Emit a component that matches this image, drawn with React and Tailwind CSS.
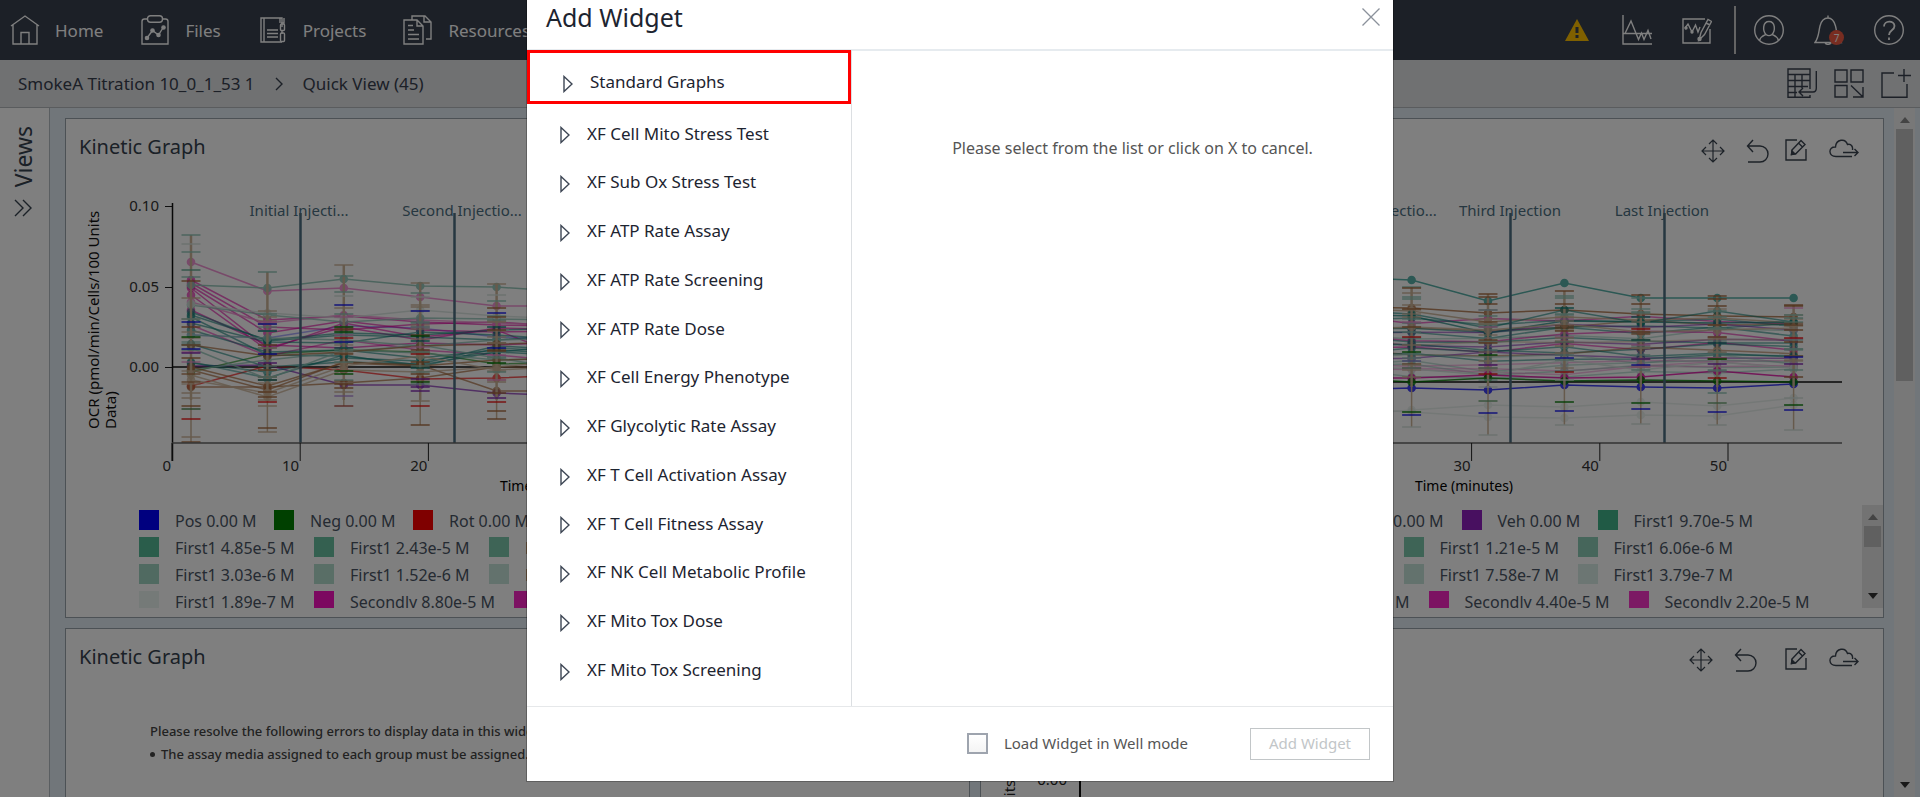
import React from "react";

const MAGENTA = "#e000a0";
const PINK = "#f08ad0";
const TEAL = "#0f8078";
const MINT = "#8fc4b6";
const PALE = "#d5e2dd";
const BROWN = "#a86a3c";
const TAN = "#cdb498";
const VIOLET = "#7d1fb0";
const GREEN = "#007a00";
const BLUE = "#1010f0";
const RED = "#f01010";

const STEP = 76.4;
const pointX = (k) => 19 + STEP * k;

const scatter = (i, k) => {
  const v = Math.sin(i * 127.1 + k * 311.7) * 43758.5453;
  return v - Math.floor(v);
};

const leftChart = {
  zero: 187,
  first: 0,
  yTicks: [
    ["0.10", 26],
    ["0.05", 107],
    ["0.00", 187],
  ],
  series: [
    [VIOLET, 0.7, [186, 185, 205, 205, 213, 216]],
    [BLUE, 0.35, [155, 158, 146, 148, 157, 160]],
    [RED, 0.7, [206, 186, 190, 199, 198, 195]],
    [GREEN, 0.6, [192, 174, 170, 172, 184, 182]],
    [MAGENTA, 0.6, [100, 140, 136, 142, 145, 146]],
    [MAGENTA, 0.6, [103, 147, 150, 144, 142, 147]],
    [MAGENTA, 0.6, [106, 153, 141, 150, 152, 151]],
    [MAGENTA, 0.6, [108, 168, 147, 160, 148, 150]],
    [MAGENTA, 0.6, [115, 170, 143, 157, 150, 180]],
    [MAGENTA, 0.6, [130, 165, 168, 163, 165, 162]],
    [MAGENTA, 0.5, [145, 176, 160, 170, 175, 182]],
    [PINK, 0.8, [122, 143, 135, 140, 143, 146]],
    [TEAL, 0.6, [135, 160, 153, 155, 150, 148]],
    [TEAL, 0.6, [132, 161, 155, 157, 160, 155]],
    [TEAL, 0.6, [143, 162, 163, 152, 155, 160]],
    [TEAL, 0.6, [150, 172, 170, 178, 170, 174]],
    [TEAL, 0.6, [137, 175, 176, 185, 172, 165]],
    [TEAL, 0.6, [164, 187, 182, 184, 166, 170]],
    [TEAL, 0.6, [183, 192, 178, 181, 172, 176]],
    [TEAL, 0.5, [182, 198, 175, 187, 168, 172]],
    [MINT, 0.8, [125, 135, 142, 138, 139, 140]],
    [MINT, 0.8, [155, 158, 160, 166, 160, 158]],
    [MINT, 0.8, [168, 199, 170, 173, 180, 178]],
    [MINT, 0.8, [190, 180, 172, 165, 178, 190]],
    [PINK, 0.9, [82, 111, 108, 117, 126, 126]],
    [MINT, 0.9, [105, 108, 99, 106, 107, 112]],
    [BROWN, 0.7, [165, 176, 172, 166, 164, 162]],
    [BROWN, 0.7, [187, 206, 183, 186, 180, 178]],
    [BROWN, 0.7, [207, 207, 203, 198, 187, 187]],
    [BROWN, 0.7, [190, 210, 182, 185, 211, 211]],
    [TAN, 0.8, [195, 217, 190, 192, 187, 180]],
    [TAN, 0.8, [200, 213, 186, 176, 190, 186]],
    [PALE, 0.8, [124, 133, 138, 130, 136, 139]],
  ],
  whiskers: [
    [[55, MINT], [64, PALE], [72, MINT], [90, "#5aa88c"], [97, MINT], [101, BROWN], [118, TAN], [142, BLUE], [147, BROWN], [157, GREEN], [165, BROWN], [169, BLUE], [173, VIOLET], [178, BROWN], [213, TAN], [218, TAN], [226, BROWN], [229, "#4a8050"], [239, RED], [257, TAN], [262, BROWN]],
    [[92, MINT], [131, TAN], [134, MINT], [142, PINK], [144, BLUE], [151, TEAL], [165, BROWN], [168, TAN], [174, BLUE], [183, VIOLET], [190, BROWN], [197, MINT], [200, TEAL], [212, BROWN], [217, BROWN], [220, TAN], [222, RED], [226, TAN], [248, BROWN], [252, TAN]],
    [[85, TAN], [96, MINT], [112, MINT], [116, PALE], [125, BLUE], [128, TAN], [134, MINT], [147, GREEN], [149, BROWN], [152, GREEN], [158, RED], [162, BLUE], [168, TEAL], [174, BROWN], [182, MINT], [191, GREEN], [194, GREEN], [204, BROWN], [208, BROWN], [212, TAN], [216, "#b08ad8"], [226, "#b05048"]],
    [[103, TAN], [113, MINT], [117, PALE], [125, TAN], [127, TAN], [131, BLUE], [143, MINT], [147, MINT], [156, GREEN], [161, TEAL], [170, BROWN], [174, RED], [182, BROWN], [188, TEAL], [194, BROWN], [199, VIOLET], [202, GREEN], [207, VIOLET], [211, VIOLET], [221, TAN], [226, RED], [245, BROWN]],
    [[104, TAN], [115, PALE], [121, MINT], [128, BROWN], [133, BLUE], [137, BROWN], [142, TAN], [147, TEAL], [150, BROWN], [163, TAN], [168, BLUE], [171, BROWN], [183, GREEN], [192, MINT], [202, TAN], [213, BROWN], [218, VIOLET], [222, RED], [231, BROWN], [239, BROWN]],
  ],
  band: [135, 205],
};

const bandColors = [MAGENTA, TEAL, BROWN, TEAL, VIOLET, TEAL, MINT, MAGENTA, TEAL, VIOLET, TAN];
const middleBand = Array.from({ length: 24 }, (_, i) => {
  const base = 140 + i * 2.3;
  const values = Array.from({ length: 7 }, (_, k) => base + (k === 2 ? 3 : 0) + (scatter(i, k) - 0.5) * 11);
  return [i > 17 ? (i % 2 ? MINT : PINK) : bandColors[i % 11], 0.55, values];
});

const rightChart = {
  zero: 202,
  first: 3,
  yTicks: [],
  series: [
    [PALE, 0.5, [228, 232, 237, 238, 235, 236, 225]],
    [PALE, 0.5, [236, 230, 225, 227, 222, 226, 218]],
    ...middleBand,
    [BROWN, 0.8, [127, 128, 133, 130, 134, 136, 137]],
    [TAN, 0.9, [128, 131, 142, 137, 140, 138, 143]],
    [TEAL, 0.6, [130, 134, 148, 130, 143, 131, 142]],
    [TEAL, 0.7, [134, 136, 153, 141, 142, 143, 142]],
    [TAN, 0.8, [150, 147, 150, 144, 152, 150, 148]],
    [PALE, 0.9, [185, 189, 195, 180, 190, 182, 188]],
    [MAGENTA, 0.8, [198, 198, 195, 198, 197, 191, 197]],
    [BLUE, 0.8, [210, 208, 210, 205, 207, 208, 204]],
    [GREEN, 0.8, [198, 202, 198, 201, 200, 201, 202]],
    ["#58b0a8", 1, [97, 100, 121, 103, 118, 118, 118]],
  ],
  whiskers: [
    [],
    [[107, MINT], [108, BROWN], [113, TAN], [117, MINT], [119, MINT], [125, TAN], [129, BROWN], [147, BROWN], [152, MINT], [157, RED], [165, TAN], [172, GREEN], [181, "#8080d0"], [188, MINT], [197, TAN], [232, GREEN], [235, BLUE], [247, PALE]],
    [[114, BROWN], [117, BROWN], [124, BROWN], [130, MINT], [136, MINT], [144, TAN], [160, BROWN], [163, BROWN], [170, MINT], [175, GREEN], [181, TAN], [185, VIOLET], [194, RED], [200, MINT], [207, PALE], [221, "#6aa070"], [233, BLUE], [255, PALE]],
    [[111, BROWN], [116, MINT], [118, MINT], [124, BROWN], [128, TEAL], [134, MINT], [148, BROWN], [151, BROWN], [158, TAN], [166, TAN], [173, TAN], [178, BLUE], [192, RED], [200, PALE], [222, GREEN], [231, BLUE], [245, PALE]],
    [[115, BROWN], [118, MINT], [124, BROWN], [132, MINT], [137, TEAL], [149, RED], [152, BROWN], [160, TEAL], [168, TAN], [175, MINT], [179, VIOLET], [185, BLUE], [190, MINT], [223, GREEN], [229, BLUE], [244, PALE]],
    [[116, BROWN], [119, BROWN], [126, BROWN], [131, MINT], [137, MINT], [145, BROWN], [157, BROWN], [163, TEAL], [172, TAN], [179, GREEN], [184, VIOLET], [190, MINT], [198, RED], [213, MINT], [223, "#6aa070"], [232, BLUE], [245, PALE]],
    [[125, BROWN], [126, BROWN], [135, MINT], [138, MINT], [145, BROWN], [150, BROWN], [158, RED], [162, BROWN], [169, MINT], [177, BLUE], [184, VIOLET], [190, MINT], [197, BROWN], [218, PALE], [225, GREEN], [230, BLUE], [250, PALE]],
  ],
  band: [128, 192],
};

const AXIS = 106;
const INJECTIONS = [
  ["Initial Injecti...", 128, 127],
  ["Second Injectio...", 282, 290],
  ["Third Injection", 423, 423],
  ["Last Injection", 577, 575],
];

function Whisker({ x, caps, band, seed }) {
  const [top, bottom] = band;
  const fill = [TAN, MINT, BROWN, TAN, MINT, PINK];
  return (
    <g>
      <path d={`M${x} ${caps[0][0]}V${bottom + 15}`} stroke={TAN} strokeWidth="2.5" />
      <path d={`M${x} ${bottom + 15}V${caps[caps.length - 1][0]}`} stroke={TAN} strokeWidth="1.5" />
      {Array.from({ length: 14 }, (_, i) => {
        const y = Math.round(top + scatter(i, seed + 20) * (bottom - top));
        return <path key={i} d={`M${x - 9.5} ${y}H${x + 9.5}`} stroke={fill[i % 6]} strokeWidth="2" opacity="0.6" />;
      })}
      {caps.map(([y, color], i) => (
        <path key={i} d={`M${x - 9.5} ${y}H${x + 9.5}`} stroke={color} strokeWidth="1.7" opacity="0.8" />
      ))}
    </g>
  );
}

function KineticChart({ chart }) {
  return (
    <svg width="880" height="315" className="block max-w-full shrink-0 overflow-hidden" fontSize="15" fill="#333" role="img" aria-label="Kinetic graph">
      <g transform="rotate(-90)" fill="#111">
        <text x="-249" y="33">OCR (pmol/min/Cells/100 Units</text>
        <text x="-249" y="50">Data)</text>
      </g>
      <g transform={`translate(${AXIS} 0)`}>
        <g fill="#4c6f82">
          {INJECTIONS.map(([label, , x]) => (
            <text key={label} x={x} y="36" textAnchor="middle">{label}</text>
          ))}
        </g>
        {chart.yTicks.map(([label, y]) => (
          <g key={label}>
            <text x="-13" y={y + 5} textAnchor="end">{label}</text>
            <path d={`M-7 ${y}.5H0`} stroke="#222" />
          </g>
        ))}
        <path d="M0.500 23V281" stroke="#111" strokeWidth="1.500" />
        <path d={`M0 ${chart.zero}H755`} stroke="#111" strokeWidth="1.500" />
        {chart.series.map(([color, opacity, values], i) => (
          <g key={i} opacity={opacity} stroke={color} fill={color}>
            <polyline fill="none" strokeWidth="1.500" points={values.map((y, k) => `${pointX(k + chart.first)},${y}`).join(" ")} />
            {values.map((y, k) => (
              <circle key={k} cx={pointX(k + chart.first)} cy={y} r="4.300" stroke="none" />
            ))}
          </g>
        ))}
        {chart.whiskers.map((caps, k) =>
          caps.length ? <Whisker key={k} x={pointX(k + chart.first)} caps={caps} band={chart.band} seed={k} /> : null
        )}
        {INJECTIONS.map(([label, x]) => (
          <path key={label} d={`M${x}.5 33V263`} stroke="#4c6f82" strokeWidth="2.500" />
        ))}
        <path d="M0 263H755" stroke="#666" strokeWidth="1.500" />
        {[0, 1, 2, 3, 4, 5].map((n) => (
          <g key={n}>
            <path d={`M${n * 128.2} 263V281`} stroke="#222" />
            <text x={n * 128.2 - 1} y="291" textAnchor="end">{n * 10}</text>
          </g>
        ))}
        <text x="377" y="311" fontSize="14" fill="#000" textAnchor="middle">Time (minutes)</text>
      </g>
    </svg>
  );
}

const LEGEND = [
  [
    ["Pos 0.00 M", "bg-[#0000ff]", "w-[135px]"],
    ["Neg 0.00 M", "bg-[#008000]", "w-[139px]"],
    ["Rot 0.00 M", "bg-[#ff0000]", "w-[134px]"],
    ["Veh 0.00 M", "bg-[#9020c0]", "w-[136px]"],
    ["First1 9.70e-5 M", "bg-[#40b48a]", "w-[175px]"],
  ],
  [
    ["First1 4.85e-5 M", "bg-[#54ba96]", "w-[175px]"],
    ["First1 2.43e-5 M", "bg-[#68c0a0]", "w-[175px]"],
    ["First1 1.21e-5 M", "bg-[#7cc8ac]", "w-[174px]"],
    ["First1 6.06e-6 M", "bg-[#8cccb6]", "w-[175px]"],
  ],
  [
    ["First1 3.03e-6 M", "bg-[#a0d4c2]", "w-[175px]"],
    ["First1 1.52e-6 M", "bg-[#b2dccd]", "w-[175px]"],
    ["First1 7.58e-7 M", "bg-[#c6e4da]", "w-[174px]"],
    ["First1 3.79e-7 M", "bg-[#d8ece6]", "w-[175px]"],
  ],
  [
    ["First1 1.89e-7 M", "bg-[#ebf5f1]", "w-[175px]"],
    ["Secondly 8.80e-5 M", "bg-[#f810c0]", "w-[200px]"],
    ["Secondly 4.40e-5 M", "bg-[#f824c4]", "w-[200px]"],
    ["Secondly 2.20e-5 M", "bg-[#f834c8]", "w-[200px]"],
  ],
];

function Arrow({ up, className }) {
  return (
    <svg viewBox="0 0 10 6" width="10" height="6" fill="currentColor" className={className}>
      <path d={up ? "M5 0L10 6H0Z" : "M0 0H10L5 6Z"} />
    </svg>
  );
}

function Legend() {
  return (
    <div className="mt-2.5 flex h-[103px] overflow-hidden text-base text-[#4a5564]">
      <div className="min-w-0 flex-1 overflow-hidden pt-[5px] pl-[73px]">
        {LEGEND.map((row, i) => (
          <ul key={i} className="flex h-[27px] items-start whitespace-nowrap">
            {row.map(([label, color, width]) => (
              <li key={label} className={`flex shrink-0 gap-4 ${width}`}>
                <span className={`size-5 shrink-0 ${color}`} />
                <span className="leading-[23px]">{label}</span>
              </li>
            ))}
          </ul>
        ))}
      </div>
      <div className="flex w-[21px] flex-col items-center bg-[#e6e6e6] py-[9px]">
        <Arrow up className="text-[#888]" />
        <div className="mt-1.5 h-[21px] w-[17px] bg-[#c1c1c1]" />
        <Arrow className="mt-auto text-[#333]" />
      </div>
    </div>
  );
}

const line = { fill: "none", stroke: "currentColor", strokeWidth: 1.4 };

const MoveIcon = () => (
  <svg width="24" height="24" viewBox="0 0 24 24" {...line} strokeWidth="1.2">
    <path d="M12 1V23M1 12H23M8 5L12 1L16 5M8 19L12 23L16 19M5 8L1 12L5 16M19 8L23 12L19 16" />
  </svg>
);
const UndoIcon = () => (
  <svg width="24" height="24" viewBox="0 0 24 24" {...line}>
    <path d="M7 1L1.500 7L7 13M2 7H14A8 8 0 0 1 14 23H2" />
  </svg>
);
const EditIcon = () => (
  <svg width="22" height="22" viewBox="0 0 22 22" {...line}>
    <path d="M12 1H1V21H21V10M7 11L16 1.500L20 5.500L11 14.500L6.500 15.500ZM13.500 4L17.500 8" />
    <path d="M7 12L10 15L6.500 15.500Z" fill="currentColor" />
  </svg>
);
const CloudIcon = () => (
  <svg width="30" height="22" viewBox="0 0 30 22" {...line}>
    <path d="M23 17.500H7C-1 17.500-1 7.500 6.500 8C7 0 16.500-1 18.500 5.500C22.500 4.500 24 8 23.500 11M14 13.500H29M25.500 10L29 13.500L25.500 17" />
  </svg>
);

function IconButton({ label, children }) {
  return (
    <button type="button" aria-label={label} className="flex shrink-0 items-center justify-center">
      {children}
    </button>
  );
}

function Panel({ wide, children }) {
  return (
    <section className="flex h-[500px] min-w-0 flex-col overflow-hidden border border-[#98a3ab] bg-white">
      <header className="flex h-[61px] shrink-0 items-start justify-between pr-6 pl-[13px]">
        <h2 className="pt-3.5 text-xl leading-7 text-[#36424f]">Kinetic Graph</h2>
        <div className={`flex items-start text-[#3a4450] ${wide ? "gap-[27px] pt-[19px]" : "gap-[15px] pt-5"}`}>
          <div className="flex gap-[21px]">
            <IconButton label="Move"><MoveIcon /></IconButton>
            <IconButton label="Undo"><UndoIcon /></IconButton>
          </div>
          <div className="flex gap-[22px]">
            <IconButton label="Edit"><EditIcon /></IconButton>
            <IconButton label="Export"><CloudIcon /></IconButton>
          </div>
        </div>
      </header>
      {children}
    </section>
  );
}

function PartialChart() {
  return (
    <svg width="880" height="430" className="block shrink-0" fontSize="15" fill="#222" role="img" aria-label="Kinetic graph">
      <text x="-308" y="34" transform="rotate(-90)">OCR (pmol/min/Cells/100 Units</text>
      <text x="86" y="95" textAnchor="end">0.00</text>
      <path d="M99 23V400" stroke="#111" strokeWidth="2" />
    </svg>
  );
}

const NAV = [
  ["Home", <path key="p" d="M1 11L15 1L29 11M3 10V29H27V10M11 29V17.500H19V29" />],
  ["Files", (
    <g key="p">
      <path d="M7.500 4H4.500A2.500 2.500 0 0 0 2 6.500V29H28V6.500A2.500 2.500 0 0 0 25.500 4H22.500" />
      <rect x="7.500" y="0.700" width="15" height="6.500" rx="3" />
      <path d="M7 23L12.500 15.500L18.500 20L23.500 12" />
      <g fill="currentColor"><circle cx="7" cy="23" r="1.600" /><circle cx="12.500" cy="15.500" r="1.600" /><circle cx="18.500" cy="20" r="1.600" /><circle cx="23.500" cy="12.500" r="1.600" /></g>
    </g>
  )],
  ["Projects", (
    <g key="p">
      <path d="M24 8V3H3V27H24M3 3V27M6 3V27M9 15H20M9 18.500H20M9 22H20M24 8.500V12M24 16V19" />
      <rect x="22.500" y="9" width="4" height="6.500" rx="1" /><rect x="22.500" y="18" width="4" height="8.500" rx="1" /><path d="M22 3V8M26 3V8H23" />
    </g>
  )],
  ["Resources", (
    <g key="p">
      <path d="M1 5H14L20 11V29H1ZM14 5V11H20M5 15H11M5 19.500H16M5 24H16M5 10.500H10M9 5V1H22L28 7V24H23M21 1V7H28" />
    </g>
  )],
];

function Icon30({ children, ...rest }) {
  return (
    <svg width="30" height="30" viewBox="0 0 30 30" className="shrink-0" {...line} {...rest}>
      {children}
    </svg>
  );
}

function TopBar() {
  return (
    <header className="flex h-[60px] shrink-0 items-center justify-between bg-[#38404e] pr-4 pl-2.5 text-white">
      <nav className="flex gap-[37px]">
        {NAV.map(([label, icon]) => (
          <a key={label} href="#" className="flex items-center gap-[15px] text-[17px]">
            <Icon30>{icon}</Icon30>
            <span className="pt-0.5">{label}</span>
          </a>
        ))}
      </nav>
      <div className="flex items-center">
        <div className="mr-[22px] flex items-center gap-[33px]">
          <IconButton label="Warnings">
            <svg width="24" height="22" viewBox="0 0 24 22"><path d="M12 0L24 22H0Z" fill="#ffc000" /><path d="M10.500 8H13.500V14H10.500ZM10.500 16H13.500V19H10.500Z" fill="#38404e" /></svg>
          </IconButton>
          <div className="flex gap-[30px]">
            <IconButton label="Chart">
              <Icon30><path d="M1 0V29H30M1 18.500H30M3 18.500L9 6L16.500 24.500L19.500 18L22 24.500L26 15.500L29 24" /></Icon30>
            </IconButton>
            <IconButton label="Edit chart">
              <Icon30>
                <path d="M23 4H1V28H28V14M3 13L6 9L10 17L13.500 10L16 17L18 12M17 25L19 17.500L26 4.500L29.500 6.500L22.500 19.500ZM24 8L28 10" />
                <g fill="currentColor"><circle cx="4" cy="13" r="1" /><circle cx="10" cy="17" r="1" /><circle cx="17.500" cy="24" r="1.500" /></g>
              </Icon30>
            </IconButton>
          </div>
        </div>
        <div className="h-12 w-0.5 bg-[#c8c8c8]" />
        <div className="ml-[18px] flex gap-[30px]">
          <IconButton label="Account">
            <Icon30><circle cx="15" cy="15" r="14.300" /><path d="M5.500 25.500C7 21 10 20.500 12 19.500C8.500 16 8.500 6.500 15 6.500S21.500 16 18 19.500C20 20.500 23 21 24.500 25.500M12 19.500C14 21 16 21 18 19.500" /></Icon30>
          </IconButton>
          <div className="relative flex">
            <IconButton label="Notifications">
              <Icon30><path d="M14 3V0.500M1 27.500C5 22 4.500 17 6 11C7.500 5 10.500 3 14 3S20 5.500 21.500 11C23 17 22.500 22 27 27.500ZM11 27.500C11.500 30 16.500 30 17 27.500" /></Icon30>
            </IconButton>
            <span className="absolute right-0 bottom-0 flex size-[15px] items-center justify-center rounded-full bg-[#f05a42] text-[10px] leading-none">7</span>
          </div>
          <IconButton label="Help">
            <Icon30><circle cx="15" cy="15" r="14.300" /><path d="M10 11.500C10 5 20.500 5 20.500 11C20.500 15.500 15 15 15 20M15 22.500V25" strokeWidth="1.800" /></Icon30>
          </IconButton>
        </div>
      </div>
    </header>
  );
}

function Breadcrumb() {
  return (
    <div className="flex h-12 shrink-0 items-center justify-between border-b border-[#b4b8bc] bg-[#e0e2e5] pr-[9px] pl-[18px] text-[#38404e]">
      <nav className="flex items-center gap-5 text-[17px]">
        <a href="#">SmokeA Titration 10_0_1_53 1</a>
        <svg width="8" height="14" viewBox="0 0 8 14" {...line}><path d="M1 1L7 7L1 13" /></svg>
        <a href="#">Quick View (45)</a>
      </nav>
      <div className="flex gap-[17px] pb-0.5">
        <IconButton label="Export table">
          <Icon30><path d="M23 21V1H1V29.300H23V27M1 6.500H23M1 12.500H23M1 18.500H21M1 24.500H10M8 6.500V29M15 6.500V20M29.300 3V20C29.300 23 28 24 26 24H12M16 20L12 24L16 28" /></Icon30>
        </IconButton>
        <IconButton label="Arrange">
          <Icon30><path d="M1 2H13V14H1ZM17 2H29V14H17ZM1 17.500H13V29H1ZM17 17.500L29 29M29 19V29H19" /></Icon30>
        </IconButton>
        <IconButton label="Add widget">
          <Icon30><path d="M13 5H1V29.300H26V16M23 1V14M17 7.500H30" /></Icon30>
        </IconButton>
      </div>
    </div>
  );
}

const ASSAYS = [
  "XF Cell Mito Stress Test",
  "XF Sub Ox Stress Test",
  "XF ATP Rate Assay",
  "XF ATP Rate Screening",
  "XF ATP Rate Dose",
  "XF Cell Energy Phenotype",
  "XF Glycolytic Rate Assay",
  "XF T Cell Activation Assay",
  "XF T Cell Fitness Assay",
  "XF NK Cell Metabolic Profile",
  "XF Mito Tox Dose",
  "XF Mito Tox Screening",
];

function Row({ label }) {
  return (
    <button type="button" className="flex items-center gap-[17px] text-left text-[17px] text-[#1d2430]">
      <svg width="10" height="18" viewBox="0 0 10 18" {...line} stroke="#3d4654" className="mt-1"><path d="M1 1.500L9 9L1 16.500Z" /></svg>
      {label}
    </button>
  );
}

function AddWidgetDialog() {
  return (
    <div className="absolute inset-0 flex justify-center bg-black/50 pb-4">
      <div role="dialog" aria-labelledby="dialog-title" className="flex w-full max-w-[866px] flex-col bg-white ring-1 ring-black/25">
        <header className="flex h-[51px] shrink-0 items-center justify-between border-b-2 border-[#e6ebef] pr-3 pb-4 pl-[19px]">
          <h1 id="dialog-title" className="text-[25px] leading-8 text-[#1d2430]">Add Widget</h1>
          <button type="button" aria-label="Close">
            <svg width="20" height="20" viewBox="0 0 20 20" fill="none" stroke="#8b919b" strokeWidth="1.300"><path d="M1.500 1.500L18.500 18.500M18.500 1.500L1.500 18.500" /></svg>
          </button>
        </header>
        <div className="flex min-h-0 flex-1">
          <div className="-mt-px flex w-[325px] flex-col border-r border-[#dcdfe2]">
            <div className="flex h-[54px] shrink-0 items-center border-[3px] border-[#ff0000] pt-2.5 pl-[33px]">
              <Row label="Standard Graphs" />
            </div>
            <ul className="flex flex-1 flex-col pt-[5px] pb-3 pl-[33px]">
              {ASSAYS.map((name) => (
                <li key={name} className="flex flex-1 items-center">
                  <Row label={name} />
                </li>
              ))}
            </ul>
          </div>
          <p className="flex-1 pt-[85px] pl-5 text-center text-base text-[#555]">
            Please select from the list or click on X to cancel.
          </p>
        </div>
        <footer className="flex h-[75px] shrink-0 items-center justify-end border-t border-[#e6e8ea] pr-[23px] pb-px text-[15px]">
          <input id="well-mode" type="checkbox" className="size-[21px] appearance-none border-2 border-[#9ea4ae] bg-gradient-to-b from-white to-[#f4f4f4]" />
          <label htmlFor="well-mode" className="ml-4 text-[#555]">Load Widget in Well mode</label>
          <button type="button" disabled className="ml-[62px] h-8 w-[120px] border border-[#c2c6c8] text-[#c2c6c8]">
            Add Widget
          </button>
        </footer>
      </div>
    </div>
  );
}

export default function App() {
  return (
    <div className="relative flex h-screen flex-col overflow-hidden bg-[#e2edf4] font-['Noto_Sans',sans-serif]">
      <TopBar />
      <Breadcrumb />
      <div className="flex min-h-0 flex-1">
        <aside className="flex w-[50px] shrink-0 flex-col items-center gap-3 border-r border-[#b4bcc2] bg-white pt-[18px] pr-1 text-[#36424f]">
          <span className="rotate-180 text-[23px] leading-8 [writing-mode:vertical-rl]">Views</span>
          <button type="button" aria-label="Expand views">
            <svg width="18" height="18" viewBox="0 0 18 18" {...line}><path d="M1 1L9 9L1 17M9 1L17 9L9 17" /></svg>
          </button>
        </aside>
        <main className="grid min-w-0 flex-1 auto-rows-max grid-cols-2 gap-2.5 overflow-hidden pt-2.5 pr-2.5 pl-[15px]">
          <Panel>
            <KineticChart chart={leftChart} />
            <Legend />
          </Panel>
          <Panel>
            <KineticChart chart={rightChart} />
            <Legend />
          </Panel>
          <Panel wide>
            <div className="pt-[30px] pl-[84px] text-[13px] leading-[23px] font-medium text-[#444]">
              <p>Please resolve the following errors to display data in this widget:</p>
              <ul>
                <li className="flex items-center gap-1.5">
                  <span className="size-[5px] rounded-full bg-[#444]" />
                  The assay media assigned to each group must be assigned.
                </li>
              </ul>
            </div>
          </Panel>
          <Panel wide>
            <PartialChart />
          </Panel>
        </main>
        <div className="mr-[5px] flex w-[21px] shrink-0 flex-col items-center bg-[#f0f0f0] py-[9px]">
          <Arrow up className="text-[#888]" />
          <div className="mt-1.5 h-[252px] w-[17px] bg-[#c1c1c1]" />
          <Arrow className="mt-auto text-[#333]" />
        </div>
      </div>
      <AddWidgetDialog />
    </div>
  );
}
